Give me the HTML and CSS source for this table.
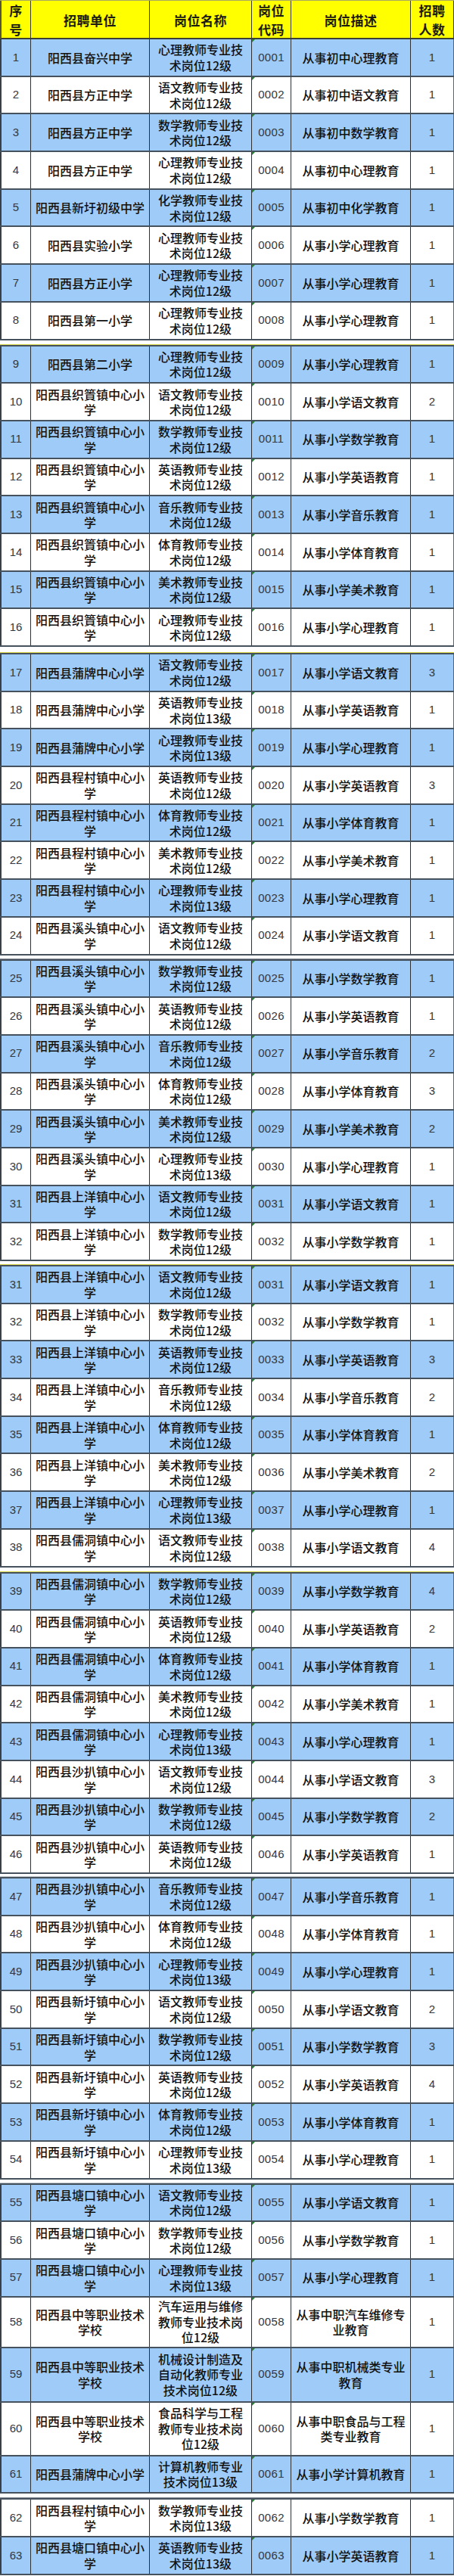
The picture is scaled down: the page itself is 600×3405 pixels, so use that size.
FILE: index.html
```html
<!DOCTYPE html>
<html lang="zh-CN">
<head>
<meta charset="utf-8">
<title>阳西县教师招聘岗位表</title>
<link rel="stylesheet" href="styles.css">
</head>
<body>
<div class="sheet">
  <div class="head">
    <div class="h">序<br>号</div>
    <div class="h">招聘单位</div>
    <div class="h">岗位名称</div>
    <div class="h">岗位<br>代码</div>
    <div class="h">岗位描述</div>
    <div class="h">招聘<br>人数</div>
  </div>

  <div class="row b"><div class="c n">1</div><div class="c u">阳西县奋兴中学</div><div class="c p">心理教师专业技<br>术岗位12级</div><div class="c k">0001</div><div class="c d">从事初中心理教育</div><div class="c q">1</div></div>
  <div class="row w"><div class="c n">2</div><div class="c u">阳西县方正中学</div><div class="c p">语文教师专业技<br>术岗位12级</div><div class="c k">0002</div><div class="c d">从事初中语文教育</div><div class="c q">1</div></div>
  <div class="row b"><div class="c n">3</div><div class="c u">阳西县方正中学</div><div class="c p">数学教师专业技<br>术岗位12级</div><div class="c k">0003</div><div class="c d">从事初中数学教育</div><div class="c q">1</div></div>
  <div class="row w"><div class="c n">4</div><div class="c u">阳西县方正中学</div><div class="c p">心理教师专业技<br>术岗位12级</div><div class="c k">0004</div><div class="c d">从事初中心理教育</div><div class="c q">1</div></div>
  <div class="row b"><div class="c n">5</div><div class="c u">阳西县新圩初级中学</div><div class="c p">化学教师专业技<br>术岗位12级</div><div class="c k">0005</div><div class="c d">从事初中化学教育</div><div class="c q">1</div></div>
  <div class="row w"><div class="c n">6</div><div class="c u">阳西县实验小学</div><div class="c p">心理教师专业技<br>术岗位12级</div><div class="c k">0006</div><div class="c d">从事小学心理教育</div><div class="c q">1</div></div>
  <div class="row b"><div class="c n">7</div><div class="c u">阳西县方正小学</div><div class="c p">心理教师专业技<br>术岗位12级</div><div class="c k">0007</div><div class="c d">从事小学心理教育</div><div class="c q">1</div></div>
  <div class="row w"><div class="c n">8</div><div class="c u">阳西县第一小学</div><div class="c p">心理教师专业技<br>术岗位12级</div><div class="c k">0008</div><div class="c d">从事小学心理教育</div><div class="c q">1</div></div>

  <div class="gap g8 gy"></div>

  <div class="row b"><div class="c n">9</div><div class="c u">阳西县第二小学</div><div class="c p">心理教师专业技<br>术岗位12级</div><div class="c k">0009</div><div class="c d">从事小学心理教育</div><div class="c q">1</div></div>
  <div class="row w"><div class="c n">10</div><div class="c u">阳西县织篢镇中心小<br>学</div><div class="c p">语文教师专业技<br>术岗位12级</div><div class="c k">0010</div><div class="c d">从事小学语文教育</div><div class="c q">2</div></div>
  <div class="row b"><div class="c n">11</div><div class="c u">阳西县织篢镇中心小<br>学</div><div class="c p">数学教师专业技<br>术岗位12级</div><div class="c k">0011</div><div class="c d">从事小学数学教育</div><div class="c q">1</div></div>
  <div class="row w"><div class="c n">12</div><div class="c u">阳西县织篢镇中心小<br>学</div><div class="c p">英语教师专业技<br>术岗位12级</div><div class="c k">0012</div><div class="c d">从事小学英语教育</div><div class="c q">1</div></div>
  <div class="row b"><div class="c n">13</div><div class="c u">阳西县织篢镇中心小<br>学</div><div class="c p">音乐教师专业技<br>术岗位12级</div><div class="c k">0013</div><div class="c d">从事小学音乐教育</div><div class="c q">1</div></div>
  <div class="row w"><div class="c n">14</div><div class="c u">阳西县织篢镇中心小<br>学</div><div class="c p">体育教师专业技<br>术岗位12级</div><div class="c k">0014</div><div class="c d">从事小学体育教育</div><div class="c q">1</div></div>
  <div class="row b"><div class="c n">15</div><div class="c u">阳西县织篢镇中心小<br>学</div><div class="c p">美术教师专业技<br>术岗位12级</div><div class="c k">0015</div><div class="c d">从事小学美术教育</div><div class="c q">1</div></div>
  <div class="row w"><div class="c n">16</div><div class="c u">阳西县织篢镇中心小<br>学</div><div class="c p">心理教师专业技<br>术岗位12级</div><div class="c k">0016</div><div class="c d">从事小学心理教育</div><div class="c q">1</div></div>

  <div class="gap g10 gy"></div>

  <div class="row b"><div class="c n">17</div><div class="c u">阳西县蒲牌中心小学</div><div class="c p">语文教师专业技<br>术岗位12级</div><div class="c k">0017</div><div class="c d">从事小学语文教育</div><div class="c q">3</div></div>
  <div class="row w"><div class="c n">18</div><div class="c u">阳西县蒲牌中心小学</div><div class="c p">英语教师专业技<br>术岗位13级</div><div class="c k">0018</div><div class="c d">从事小学英语教育</div><div class="c q">1</div></div>
  <div class="row b"><div class="c n">19</div><div class="c u">阳西县蒲牌中心小学</div><div class="c p">心理教师专业技<br>术岗位13级</div><div class="c k">0019</div><div class="c d">从事小学心理教育</div><div class="c q">1</div></div>
  <div class="row w"><div class="c n">20</div><div class="c u">阳西县程村镇中心小<br>学</div><div class="c p">英语教师专业技<br>术岗位12级</div><div class="c k">0020</div><div class="c d">从事小学英语教育</div><div class="c q">3</div></div>
  <div class="row b"><div class="c n">21</div><div class="c u">阳西县程村镇中心小<br>学</div><div class="c p">体育教师专业技<br>术岗位12级</div><div class="c k">0021</div><div class="c d">从事小学体育教育</div><div class="c q">1</div></div>
  <div class="row w"><div class="c n">22</div><div class="c u">阳西县程村镇中心小<br>学</div><div class="c p">美术教师专业技<br>术岗位12级</div><div class="c k">0022</div><div class="c d">从事小学美术教育</div><div class="c q">1</div></div>
  <div class="row b"><div class="c n">23</div><div class="c u">阳西县程村镇中心小<br>学</div><div class="c p">心理教师专业技<br>术岗位13级</div><div class="c k">0023</div><div class="c d">从事小学心理教育</div><div class="c q">1</div></div>
  <div class="row w"><div class="c n">24</div><div class="c u">阳西县溪头镇中心小<br>学</div><div class="c p">语文教师专业技<br>术岗位12级</div><div class="c k">0024</div><div class="c d">从事小学语文教育</div><div class="c q">1</div></div>

  <div class="gap g7 gd"></div>

  <div class="row b"><div class="c n">25</div><div class="c u">阳西县溪头镇中心小<br>学</div><div class="c p">数学教师专业技<br>术岗位12级</div><div class="c k">0025</div><div class="c d">从事小学数学教育</div><div class="c q">1</div></div>
  <div class="row w"><div class="c n">26</div><div class="c u">阳西县溪头镇中心小<br>学</div><div class="c p">英语教师专业技<br>术岗位12级</div><div class="c k">0026</div><div class="c d">从事小学英语教育</div><div class="c q">1</div></div>
  <div class="row b"><div class="c n">27</div><div class="c u">阳西县溪头镇中心小<br>学</div><div class="c p">音乐教师专业技<br>术岗位12级</div><div class="c k">0027</div><div class="c d">从事小学音乐教育</div><div class="c q">2</div></div>
  <div class="row w"><div class="c n">28</div><div class="c u">阳西县溪头镇中心小<br>学</div><div class="c p">体育教师专业技<br>术岗位12级</div><div class="c k">0028</div><div class="c d">从事小学体育教育</div><div class="c q">3</div></div>
  <div class="row b"><div class="c n">29</div><div class="c u">阳西县溪头镇中心小<br>学</div><div class="c p">美术教师专业技<br>术岗位12级</div><div class="c k">0029</div><div class="c d">从事小学美术教育</div><div class="c q">2</div></div>
  <div class="row w"><div class="c n">30</div><div class="c u">阳西县溪头镇中心小<br>学</div><div class="c p">心理教师专业技<br>术岗位13级</div><div class="c k">0030</div><div class="c d">从事小学心理教育</div><div class="c q">1</div></div>
  <div class="row b"><div class="c n">31</div><div class="c u">阳西县上洋镇中心小<br>学</div><div class="c p">语文教师专业技<br>术岗位12级</div><div class="c k">0031</div><div class="c d">从事小学语文教育</div><div class="c q">1</div></div>
  <div class="row w"><div class="c n">32</div><div class="c u">阳西县上洋镇中心小<br>学</div><div class="c p">数学教师专业技<br>术岗位12级</div><div class="c k">0032</div><div class="c d">从事小学数学教育</div><div class="c q">1</div></div>

  <div class="gap g7 gy"></div>

  <div class="row b"><div class="c n">31</div><div class="c u">阳西县上洋镇中心小<br>学</div><div class="c p">语文教师专业技<br>术岗位12级</div><div class="c k">0031</div><div class="c d">从事小学语文教育</div><div class="c q">1</div></div>
  <div class="row w"><div class="c n">32</div><div class="c u">阳西县上洋镇中心小<br>学</div><div class="c p">数学教师专业技<br>术岗位12级</div><div class="c k">0032</div><div class="c d">从事小学数学教育</div><div class="c q">1</div></div>
  <div class="row b"><div class="c n">33</div><div class="c u">阳西县上洋镇中心小<br>学</div><div class="c p">英语教师专业技<br>术岗位12级</div><div class="c k">0033</div><div class="c d">从事小学英语教育</div><div class="c q">3</div></div>
  <div class="row w"><div class="c n">34</div><div class="c u">阳西县上洋镇中心小<br>学</div><div class="c p">音乐教师专业技<br>术岗位12级</div><div class="c k">0034</div><div class="c d">从事小学音乐教育</div><div class="c q">2</div></div>
  <div class="row b"><div class="c n">35</div><div class="c u">阳西县上洋镇中心小<br>学</div><div class="c p">体育教师专业技<br>术岗位12级</div><div class="c k">0035</div><div class="c d">从事小学体育教育</div><div class="c q">1</div></div>
  <div class="row w"><div class="c n">36</div><div class="c u">阳西县上洋镇中心小<br>学</div><div class="c p">美术教师专业技<br>术岗位12级</div><div class="c k">0036</div><div class="c d">从事小学美术教育</div><div class="c q">2</div></div>
  <div class="row b"><div class="c n">37</div><div class="c u">阳西县上洋镇中心小<br>学</div><div class="c p">心理教师专业技<br>术岗位13级</div><div class="c k">0037</div><div class="c d">从事小学心理教育</div><div class="c q">1</div></div>
  <div class="row w"><div class="c n">38</div><div class="c u">阳西县儒洞镇中心小<br>学</div><div class="c p">语文教师专业技<br>术岗位12级</div><div class="c k">0038</div><div class="c d">从事小学语文教育</div><div class="c q">4</div></div>

  <div class="gap g8 gy"></div>

  <div class="row b"><div class="c n">39</div><div class="c u">阳西县儒洞镇中心小<br>学</div><div class="c p">数学教师专业技<br>术岗位12级</div><div class="c k">0039</div><div class="c d">从事小学数学教育</div><div class="c q">4</div></div>
  <div class="row w"><div class="c n">40</div><div class="c u">阳西县儒洞镇中心小<br>学</div><div class="c p">英语教师专业技<br>术岗位12级</div><div class="c k">0040</div><div class="c d">从事小学英语教育</div><div class="c q">2</div></div>
  <div class="row b"><div class="c n">41</div><div class="c u">阳西县儒洞镇中心小<br>学</div><div class="c p">体育教师专业技<br>术岗位12级</div><div class="c k">0041</div><div class="c d">从事小学体育教育</div><div class="c q">1</div></div>
  <div class="row w"><div class="c n">42</div><div class="c u">阳西县儒洞镇中心小<br>学</div><div class="c p">美术教师专业技<br>术岗位12级</div><div class="c k">0042</div><div class="c d">从事小学美术教育</div><div class="c q">1</div></div>
  <div class="row b"><div class="c n">43</div><div class="c u">阳西县儒洞镇中心小<br>学</div><div class="c p">心理教师专业技<br>术岗位13级</div><div class="c k">0043</div><div class="c d">从事小学心理教育</div><div class="c q">1</div></div>
  <div class="row w"><div class="c n">44</div><div class="c u">阳西县沙扒镇中心小<br>学</div><div class="c p">语文教师专业技<br>术岗位12级</div><div class="c k">0044</div><div class="c d">从事小学语文教育</div><div class="c q">3</div></div>
  <div class="row b"><div class="c n">45</div><div class="c u">阳西县沙扒镇中心小<br>学</div><div class="c p">数学教师专业技<br>术岗位12级</div><div class="c k">0045</div><div class="c d">从事小学数学教育</div><div class="c q">2</div></div>
  <div class="row w"><div class="c n">46</div><div class="c u">阳西县沙扒镇中心小<br>学</div><div class="c p">英语教师专业技<br>术岗位12级</div><div class="c k">0046</div><div class="c d">从事小学英语教育</div><div class="c q">1</div></div>

  <div class="gap g6 gg"></div>

  <div class="row b"><div class="c n">47</div><div class="c u">阳西县沙扒镇中心小<br>学</div><div class="c p">音乐教师专业技<br>术岗位12级</div><div class="c k">0047</div><div class="c d">从事小学音乐教育</div><div class="c q">1</div></div>
  <div class="row w"><div class="c n">48</div><div class="c u">阳西县沙扒镇中心小<br>学</div><div class="c p">体育教师专业技<br>术岗位12级</div><div class="c k">0048</div><div class="c d">从事小学体育教育</div><div class="c q">1</div></div>
  <div class="row b"><div class="c n">49</div><div class="c u">阳西县沙扒镇中心小<br>学</div><div class="c p">心理教师专业技<br>术岗位13级</div><div class="c k">0049</div><div class="c d">从事小学心理教育</div><div class="c q">1</div></div>
  <div class="row w"><div class="c n">50</div><div class="c u">阳西县新圩镇中心小<br>学</div><div class="c p">语文教师专业技<br>术岗位12级</div><div class="c k">0050</div><div class="c d">从事小学语文教育</div><div class="c q">2</div></div>
  <div class="row b"><div class="c n">51</div><div class="c u">阳西县新圩镇中心小<br>学</div><div class="c p">数学教师专业技<br>术岗位12级</div><div class="c k">0051</div><div class="c d">从事小学数学教育</div><div class="c q">3</div></div>
  <div class="row w"><div class="c n">52</div><div class="c u">阳西县新圩镇中心小<br>学</div><div class="c p">英语教师专业技<br>术岗位12级</div><div class="c k">0052</div><div class="c d">从事小学英语教育</div><div class="c q">4</div></div>
  <div class="row b"><div class="c n">53</div><div class="c u">阳西县新圩镇中心小<br>学</div><div class="c p">体育教师专业技<br>术岗位12级</div><div class="c k">0053</div><div class="c d">从事小学体育教育</div><div class="c q">1</div></div>
  <div class="row w"><div class="c n">54</div><div class="c u">阳西县新圩镇中心小<br>学</div><div class="c p">心理教师专业技<br>术岗位13级</div><div class="c k">0054</div><div class="c d">从事小学心理教育</div><div class="c q">1</div></div>

  <div class="gap g7 gg"></div>

  <div class="row b"><div class="c n">55</div><div class="c u">阳西县塘口镇中心小<br>学</div><div class="c p">语文教师专业技<br>术岗位12级</div><div class="c k">0055</div><div class="c d">从事小学语文教育</div><div class="c q">1</div></div>
  <div class="row w"><div class="c n">56</div><div class="c u">阳西县塘口镇中心小<br>学</div><div class="c p">数学教师专业技<br>术岗位12级</div><div class="c k">0056</div><div class="c d">从事小学数学教育</div><div class="c q">1</div></div>
  <div class="row b"><div class="c n">57</div><div class="c u">阳西县塘口镇中心小<br>学</div><div class="c p">心理教师专业技<br>术岗位13级</div><div class="c k">0057</div><div class="c d">从事小学心理教育</div><div class="c q">1</div></div>
  <div class="row w t67"><div class="c n">58</div><div class="c u">阳西县中等职业技术<br>学校</div><div class="c p">汽车运用与维修<br>教师专业技术岗<br>位12级</div><div class="c k">0058</div><div class="c d">从事中职汽车维修专<br>业教育</div><div class="c q">1</div></div>
  <div class="row b t72"><div class="c n">59</div><div class="c u">阳西县中等职业技术<br>学校</div><div class="c p">机械设计制造及<br>自动化教师专业<br>技术岗位12级</div><div class="c k">0059</div><div class="c d">从事中职机械类专业<br>教育</div><div class="c q">1</div></div>
  <div class="row w t71"><div class="c n">60</div><div class="c u">阳西县中等职业技术<br>学校</div><div class="c p">食品科学与工程<br>教师专业技术岗<br>位12级</div><div class="c k">0060</div><div class="c d">从事中职食品与工程<br>类专业教育</div><div class="c q">1</div></div>
  <div class="row b"><div class="c n">61</div><div class="c u">阳西县蒲牌中心小学</div><div class="c p">计算机教师专业<br>技术岗位13级</div><div class="c k">0061</div><div class="c d">从事小学计算机教育</div><div class="c q">1</div></div>

  <div class="gap g8 gd"></div>

  <div class="row w"><div class="c n">62</div><div class="c u">阳西县程村镇中心小<br>学</div><div class="c p">数学教师专业技<br>术岗位13级</div><div class="c k">0062</div><div class="c d">从事小学数学教育</div><div class="c q">1</div></div>
  <div class="row b"><div class="c n">63</div><div class="c u">阳西县塘口镇中心小<br>学</div><div class="c p">英语教师专业技<br>术岗位13级</div><div class="c k">0063</div><div class="c d">从事小学英语教育</div><div class="c q">1</div></div>
</div>
</body>
</html>
```

FILE: styles.css
```css
* {
  box-sizing: border-box;
}

html,
body {
  margin: 0;
  padding: 0;
  background: #ffffff;
}

body {
  width: 600px;
  font-family: "Noto Sans CJK SC", "Noto Sans", sans-serif;
  color: #111111;
}

.sheet {
  display: flex;
  flex-direction: column;
}

.head,
.row {
  display: grid;
  grid-template-columns: 41px 157px 135px 52px 158px 57px;
}

.head {
  height: 52px;
  background: #ffff00;
  border-top: 1px solid #a8a860;
  border-bottom: 2px solid #3c3f33;
}

.h {
  display: flex;
  align-items: center;
  justify-content: center;
  text-align: center;
  font-size: 17px;
  font-weight: 700;
  line-height: 25px;
  letter-spacing: 0.5px;
  color: #1b1b10;
  border-right: 1px solid #3a3a30;
  white-space: nowrap;
}

.h:first-child {
  border-left: 2px solid #55553a;
}

.row {
  height: 49.7px;
  border-bottom: 2px solid #45525e;
}

.row.b {
  background: #9ecbf8;
}

.row.w {
  background: #ffffff;
}

.row.t67 {
  height: 67px;
}

.row.t72 {
  height: 72px;
}

.row.t71 {
  height: 71px;
}

.c {
  position: relative;
  display: flex;
  align-items: center;
  justify-content: center;
  text-align: center;
  font-size: 16px;
  font-weight: 500;
  line-height: 20.5px;
  white-space: nowrap;
  border-right: 1px solid #2c3136;
}

.c.n {
  border-left: 2px solid #3a4047;
}

.c.n,
.c.k,
.c.q {
  font-family: "Liberation Sans", Arial, sans-serif;
  font-size: 15px;
  font-weight: 400;
  color: #333840;
}

.c.k {
  letter-spacing: 0.3px;
}

.c.k::before {
  content: "";
  position: absolute;
  left: 0;
  top: 0;
  border-top: 4px solid #1d8a2a;
  border-right: 4px solid transparent;
}

.c.q {
  border-right: 1px solid #5a6570;
}

.gap {
  border-bottom: 2px solid #45525e;
}

.gap.gy {
  background: linear-gradient(#ffffff calc(100% - 1px), #d9d84c 0);
}

.gap.gg {
  background: linear-gradient(#ffffff calc(100% - 1px), #b9c0c6 0);
}

.gap.gd {
  background: linear-gradient(#ffffff calc(100% - 1px), #7d868e 0);
}

.g6 {
  height: 6px;
}

.g7 {
  height: 7px;
}

.g8 {
  height: 8px;
}

.g10 {
  height: 10px;
}
```
